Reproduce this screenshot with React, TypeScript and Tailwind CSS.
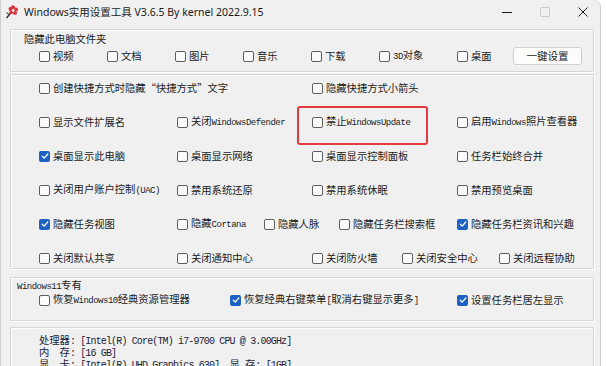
import React from "react";

type Item = { label: string; checked?: boolean; w?: string; mark?: boolean };

const labelMono = "font-['Liberation_Mono',monospace] text-[9px] tracking-[-0.5px]";
const infoMono = "font-['Liberation_Mono',monospace] text-[10px] tracking-[-0.85px]";

// split text into ascii / cjk runs so latin parts get the narrow mono look
function Txt({ s, mono }: { s: string; mono: string }) {
  const parts = s.match(/[\x00-\x7f]+|[^\x00-\x7f]+/g) || [];
  return (
    <>
      {parts.map((p, i) =>
        /^[\x00-\x7f]+$/.test(p) ? (
          <span key={i} className={mono}>
            {p}
          </span>
        ) : (
          <span key={i}>{p}</span>
        )
      )}
    </>
  );
}

function Box({ checked }: { checked?: boolean }) {
  if (checked)
    return (
      <span className="flex h-[11px] w-[11px] shrink-0 items-center justify-center rounded-[2px] bg-[#1d62c2]">
        <svg width="8" height="8" viewBox="0 0 8 8">
          <path
            d="M1.3 4.3 L3.2 6.1 L6.8 2"
            fill="none"
            stroke="#fff"
            strokeWidth="1.3"
            strokeLinecap="round"
            strokeLinejoin="round"
          />
        </svg>
      </span>
    );
  return <span className="h-[11px] w-[11px] shrink-0 rounded-[2px] border border-[#5e5e5e] bg-[#fbfbfb]" />;
}

function Check({ label, checked, w = "", mark }: Item) {
  return (
    <div className={`relative flex shrink-0 items-center gap-[3px] ${w}`}>
      <Box checked={checked} />
      <span className="whitespace-nowrap text-[#1b1b1b]">
        <Txt s={label} mono={labelMono} />
      </span>
      {mark && (
        <div className="absolute left-[-15px] top-[-9px] h-[39px] w-[131px] rounded-[3px] border-2 border-[#e23a3f]" />
      )}
    </div>
  );
}

const folders: Item[] = [
  { label: "视频", w: "w-[68px]" },
  { label: "文档", w: "w-[68px]" },
  { label: "图片", w: "w-[68px]" },
  { label: "音乐", w: "w-[68px]" },
  { label: "下载", w: "w-[68px]" },
  { label: "3D对象", w: "w-[78px]" },
  { label: "桌面", w: "w-[56px]" },
];

const rows: Item[][] = [
  [
    { label: "创建快捷方式时隐藏“快捷方式”文字", w: "w-[273px]" },
    { label: "隐藏快捷方式小箭头" },
  ],
  [
    { label: "显示文件扩展名", w: "w-[138px]" },
    { label: "关闭WindowsDefender", w: "w-[135px]" },
    { label: "禁止WindowsUpdate", w: "w-[145px]", mark: true },
    { label: "启用Windows照片查看器" },
  ],
  [
    { label: "桌面显示此电脑", checked: true, w: "w-[138px]" },
    { label: "桌面显示网络", w: "w-[135px]" },
    { label: "桌面显示控制面板", w: "w-[145px]" },
    { label: "任务栏始终合并" },
  ],
  [
    { label: "关闭用户账户控制(UAC)", w: "w-[138px]" },
    { label: "禁用系统还原", w: "w-[135px]" },
    { label: "禁用系统休眠", w: "w-[145px]" },
    { label: "禁用预览桌面" },
  ],
  [
    { label: "隐藏任务视图", checked: true, w: "w-[138px]" },
    { label: "隐藏Cortana", w: "w-[87px]" },
    { label: "隐藏人脉", w: "w-[75px]" },
    { label: "隐藏任务栏搜索框", w: "w-[118px]" },
    { label: "隐藏任务栏资讯和兴趣", checked: true },
  ],
  [
    { label: "关闭默认共享", w: "w-[138px]" },
    { label: "关闭通知中心", w: "w-[135px]" },
    { label: "关闭防火墙", w: "w-[90px]" },
    { label: "关闭安全中心", w: "w-[97px]" },
    { label: "关闭远程协助" },
  ],
];

const win11: Item[] = [
  { label: "恢复Windows10经典资源管理器", w: "w-[191px]" },
  { label: "恢复经典右键菜单[取消右键显示更多]", checked: true, w: "w-[227px]" },
  { label: "设置任务栏居左显示", checked: true },
];

const info = [
  "处理器: [Intel(R) Core(TM) i7-9700 CPU @ 3.00GHz]",
  "内  存: [16 GB]",
  "显  卡: [Intel(R) UHD Graphics 630]  显 存: [1GB]",
];

const group = "w-[584px] rounded-[1px] border border-[#d6d6d6] shadow-[inset_1px_1px_0_#ffffff,1px_1px_0_#ffffff]";

function AppIcon() {
  return (
    <svg width="15" height="15" viewBox="0 0 15 15">
      <path d="M7.5 8 L3 13.5" stroke="#3a2a2a" strokeWidth="1.4" strokeLinecap="round" />
      <path d="M5 11 Q2.5 10 2 8 Q4.5 8.5 5.5 10.5Z" fill="#5a3a3a" />
      <circle cx="9" cy="3.3" r="2" fill="#d8303a" />
      <circle cx="12" cy="5.6" r="2" fill="#d8303a" />
      <circle cx="11" cy="9" r="2" fill="#d8303a" />
      <circle cx="7.2" cy="8.4" r="1.8" fill="#d8303a" />
      <circle cx="6.4" cy="5" r="1.9" fill="#d8303a" />
      <circle cx="9.2" cy="6.3" r="1.5" fill="#f4c7c9" />
    </svg>
  );
}

export default function App() {
  return (
    <div className="h-[366px] w-[607px] overflow-hidden bg-white font-['Noto_Sans_CJK_SC',sans-serif] text-[10.3px] leading-[12px] text-[#1b1b1b]">
      <div className="h-full w-[601px] rounded-tr-[7px] border-l border-r border-[#cdcdcd] bg-[#f0f0f0]">
        {/* title bar */}
        <div className="flex h-[23px] items-center">
          <div className="ml-[3px] flex w-[20px] items-center">
            <AppIcon />
          </div>
          <span className="whitespace-nowrap font-['Noto_Sans','Noto_Sans_CJK_SC',sans-serif] text-[10.5px] text-[#1a1a1a]">
            Windows实用设置工具 V3.6.5 By kernel 2022.9.15
          </span>
          <div className="ml-auto mr-[-2px] flex">
            <div className="flex h-[23px] w-[38px] items-center justify-center">
              <svg width="10" height="10" viewBox="0 0 10 10">
                <path d="M0 5.5h10" stroke="#1a1a1a" />
              </svg>
            </div>
            <div className="flex h-[23px] w-[38px] items-center justify-center">
              <svg width="10" height="10" viewBox="0 0 10 10">
                <rect x="0.5" y="0.5" width="9" height="9" rx="1" fill="none" stroke="#c9c9c9" />
              </svg>
            </div>
            <div className="flex h-[23px] w-[38px] items-center justify-center">
              <svg width="10" height="10" viewBox="0 0 10 10">
                <path d="M0.5 0.5l9 9M9.5 0.5l-9 9" stroke="#1a1a1a" />
              </svg>
            </div>
          </div>
        </div>

        <div className="pl-[9px] pt-[6px]">
          {/* hide folders */}
          <div className={`${group} h-[43px]`}>
            <div className="ml-[13px] mt-[3px] h-[12px]">隐藏此电脑文件夹</div>
            <div className="mt-[1px] flex h-[20px] items-center pl-[28px]">
              {folders.map((f) => (
                <Check key={f.label} {...f} />
              ))}
              <button className="flex h-[18px] w-[69px] items-center justify-center rounded-[3px] border border-[#d0d0d0] bg-[#fdfdfd] text-[10.5px] text-[#1b1b1b]">
                一键设置
              </button>
            </div>
          </div>

          {/* main options */}
          <div className={`${group} mt-[2px] flex flex-col gap-[14px] pb-[0px] pl-[28px] pt-[3px]`}>
            {rows.map((r, i) => (
              <div key={i} className="flex h-[20px] items-center">
                {r.map((it) => (
                  <Check key={it.label} {...it} />
                ))}
              </div>
            ))}
          </div>

          {/* windows 11 */}
          <div className={`${group} mt-[8px] h-[44px]`}>
            <div className="ml-[6px] mt-[1px] h-[12px] whitespace-nowrap">
              <Txt s="Windows11专有" mono={labelMono} />
            </div>
            <div className="flex h-[18px] items-center pl-[28px]">
              {win11.map((it) => (
                <Check key={it.label} {...it} />
              ))}
            </div>
          </div>

          {/* system info */}
          <div className={`${group} mt-[6px] h-[60px] pl-[28px] pt-[6px] text-[#1c2038]`}>
            {info.map((l) => (
              <div key={l} className="h-[12px] whitespace-pre">
                <Txt s={l} mono={infoMono} />
              </div>
            ))}
          </div>
        </div>
      </div>
    </div>
  );
}
